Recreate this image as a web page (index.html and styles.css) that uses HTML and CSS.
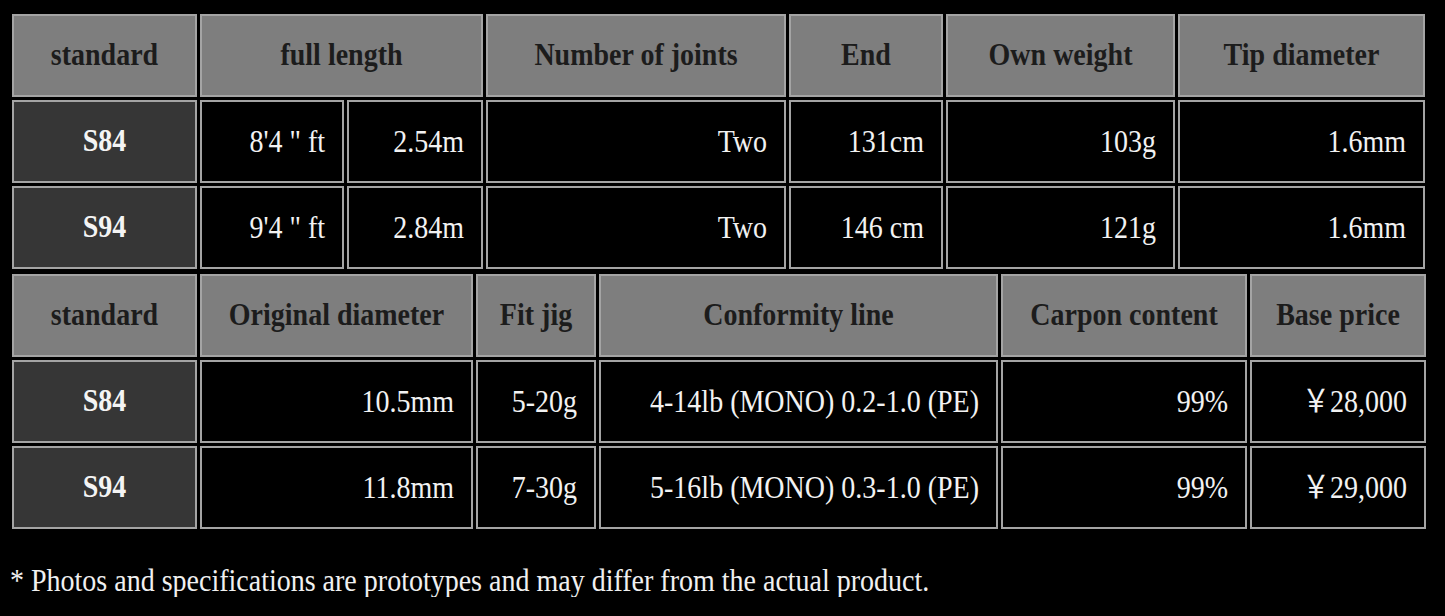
FILE: index.html
```html
<!DOCTYPE html>
<html lang="en">
<head>
<meta charset="utf-8">
<title>Specifications</title>
<link rel="stylesheet" href="styles.css">
</head>
<body>
<div class="page">
  <table class="spec spec-a">
    <colgroup>
      <col class="w185"><col class="w144"><col class="w136"><col class="w300"><col class="w154"><col class="w229"><col class="w247">
    </colgroup>
    <tr class="head">
      <th><span class="t">standard</span></th>
      <th colspan="2"><span class="t">full length</span></th>
      <th><span class="t">Number of joints</span></th>
      <th><span class="t">End</span></th>
      <th><span class="t">Own weight</span></th>
      <th><span class="t">Tip diameter</span></th>
    </tr>
    <tr>
      <th class="model"><span class="t">S84</span></th>
      <td><span class="t">8'4 " ft</span></td>
      <td><span class="t">2.54m</span></td>
      <td><span class="t">Two</span></td>
      <td><span class="t">131cm</span></td>
      <td><span class="t">103g</span></td>
      <td><span class="t">1.6mm</span></td>
    </tr>
    <tr>
      <th class="model"><span class="t">S94</span></th>
      <td><span class="t">9'4 " ft</span></td>
      <td><span class="t">2.84m</span></td>
      <td><span class="t">Two</span></td>
      <td><span class="t">146 cm</span></td>
      <td><span class="t">121g</span></td>
      <td><span class="t">1.6mm</span></td>
    </tr>
  </table>
  <table class="spec spec-b">
    <colgroup>
      <col class="w185"><col class="w273"><col class="w120"><col class="w399"><col class="w246"><col class="w176">
    </colgroup>
    <tr class="head">
      <th><span class="t">standard</span></th>
      <th><span class="t">Original diameter</span></th>
      <th><span class="t">Fit jig</span></th>
      <th><span class="t">Conformity line</span></th>
      <th><span class="t">Carpon content</span></th>
      <th><span class="t">Base price</span></th>
    </tr>
    <tr>
      <th class="model"><span class="t">S84</span></th>
      <td><span class="t">10.5mm</span></td>
      <td><span class="t">5-20g</span></td>
      <td><span class="t">4-14lb (MONO) 0.2-1.0 (PE)</span></td>
      <td><span class="t">99%</span></td>
      <td><span class="t">￥28,000</span></td>
    </tr>
    <tr>
      <th class="model"><span class="t">S94</span></th>
      <td><span class="t">11.8mm</span></td>
      <td><span class="t">7-30g</span></td>
      <td><span class="t">5-16lb (MONO) 0.3-1.0 (PE)</span></td>
      <td><span class="t">99%</span></td>
      <td><span class="t">￥29,000</span></td>
    </tr>
  </table>
  <p class="note"><span class="t">* Photos and specifications are prototypes and may differ from the actual product.</span></p>
</div>
</body>
</html>
```

FILE: styles.css
```css
html, body {
  margin: 0;
  padding: 0;
  background: #000;
}

.page {
  padding: 11px 0 0 9px;
  font-family: "Liberation Serif", "Noto Sans CJK JP", serif;
  font-size: 28px;
  color: #f2f2f2;
}

.t {
  display: inline-block;
  transform: scaleY(1.13);
}

.spec {
  border-collapse: separate;
  border-spacing: 3px;
  table-layout: fixed;
}

.spec-a { width: 1419px; }
.spec-b { width: 1420px; margin-top: -1px; }

.w185 { width: 185px; }
.w144 { width: 144px; }
.w136 { width: 136px; }
.w300 { width: 300px; }
.w154 { width: 154px; }
.w229 { width: 229px; }
.w247 { width: 247px; }
.w273 { width: 273px; }
.w120 { width: 120px; }
.w399 { width: 399px; }
.w246 { width: 246px; }
.w176 { width: 176px; }

.spec th,
.spec td {
  box-sizing: border-box;
  height: 83px;
  padding: 0 17px 0 4px;
  border: 2px solid #a4a4a4;
  background: #000;
  text-align: right;
  vertical-align: middle;
  font-weight: normal;
  white-space: nowrap;
  line-height: 1;
}

.spec .head th {
  background: #7e7e7e;
  color: #1c1c1c;
  font-weight: bold;
  text-align: center;
  padding: 0 4px 2px;
}

.spec th.model {
  background: #363636;
  color: #f4f4f4;
  font-weight: bold;
  text-align: center;
  padding: 0 4px 1px;
}

.note {
  margin: 33px 0 0 1px;
  line-height: 32px;
  color: #f0f0f0;
}
```
